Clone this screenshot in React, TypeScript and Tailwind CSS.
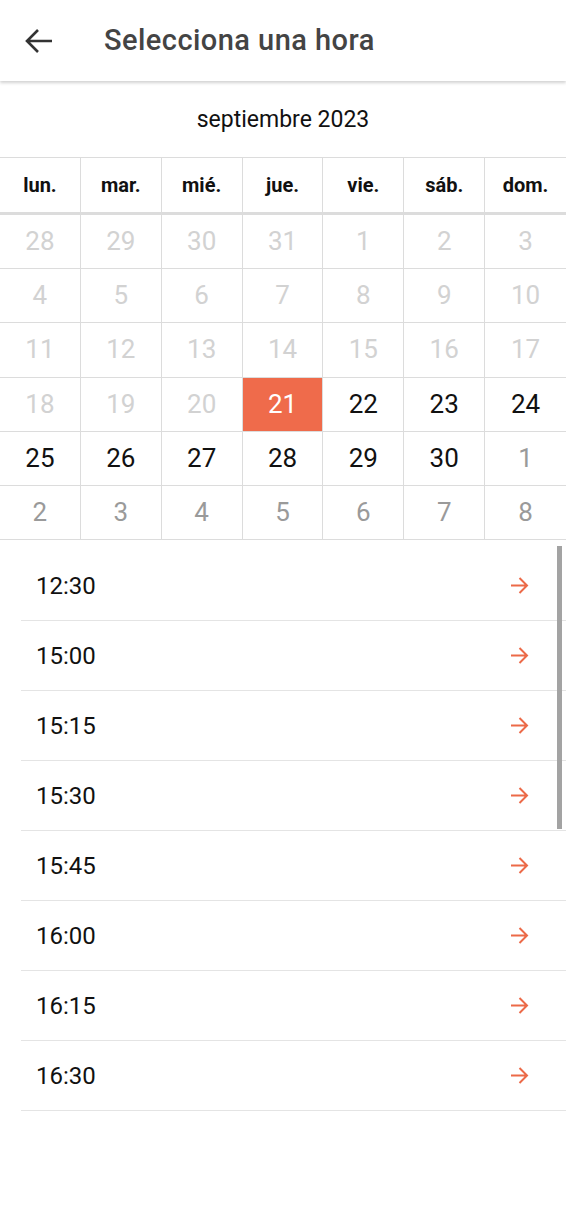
import React from "react";

const weeks: { n: number; t: "past" | "cur" | "next" | "sel" }[][] = [
  [28, 29, 30, 31, 1, 2, 3].map((n) => ({ n, t: "past" as const })),
  [4, 5, 6, 7, 8, 9, 10].map((n) => ({ n, t: "past" as const })),
  [11, 12, 13, 14, 15, 16, 17].map((n) => ({ n, t: "past" as const })),
  [
    { n: 18, t: "past" },
    { n: 19, t: "past" },
    { n: 20, t: "past" },
    { n: 21, t: "sel" },
    { n: 22, t: "cur" },
    { n: 23, t: "cur" },
    { n: 24, t: "cur" },
  ],
  [
    { n: 25, t: "cur" },
    { n: 26, t: "cur" },
    { n: 27, t: "cur" },
    { n: 28, t: "cur" },
    { n: 29, t: "cur" },
    { n: 30, t: "cur" },
    { n: 1, t: "next" },
  ],
  [2, 3, 4, 5, 6, 7, 8].map((n) => ({ n, t: "next" as const })),
];

const days = ["lun.", "mar.", "mié.", "jue.", "vie.", "sáb.", "dom."];
const times = ["12:30", "15:00", "15:15", "15:30", "15:45", "16:00", "16:15", "16:30"];

function Arrow() {
  return (
    <svg width="19" height="19" viewBox="0 0 19 19" fill="none">
      <path d="M1 9.5H17M9.5 2L17 9.5L9.5 17" stroke="#ec6a48" strokeWidth="2" strokeLinecap="butt" strokeLinejoin="miter" />
    </svg>
  );
}

export default function App() {
  return (
    <div className="w-[566px] h-[1224px] bg-white overflow-hidden relative" style={{ fontFamily: "Roboto, 'Noto Sans', sans-serif" }}>
      <div className="h-[81px] flex items-center bg-white shadow-[0_2px_3px_rgba(0,0,0,0.18)] relative z-10">
        <div className="w-[104px] flex items-center pl-[25px]">
          <svg width="28" height="26" viewBox="0 0 28 26" fill="none">
            <path d="M27 13H3M13 2L2 13L13 24" stroke="#333" strokeWidth="2.6" />
          </svg>
        </div>
        <span className="text-[29px] font-medium text-[#444] pt-[1px] tracking-[0.45px]">Selecciona una hora</span>
      </div>
      <div className="h-[76px] flex items-center justify-center text-[23px] text-[#111] pt-[3px]">septiembre 2023</div>
      <div className="border-t border-[#dcdcdc]">
        <div className="grid grid-cols-7 h-[57px] border-b-[3px] border-[#dcdcdc]">
          {days.map((d, i) => (
            <div key={d} className={`flex items-center justify-center text-[20px] font-bold text-[#111] ${i < 6 ? "border-r border-[#dcdcdc]" : ""}`}>
              {d}
            </div>
          ))}
        </div>
        {weeks.map((w, wi) => (
          <div key={wi} className="grid grid-cols-7 h-[54.2px] border-b border-[#dcdcdc]">
            {w.map((c, i) => (
              <div
                key={i}
                className={`flex items-center justify-center text-[26px] ${i < 6 ? "border-r border-[#dcdcdc]" : ""} ${
                  c.t === "past" ? "text-[#d2d2d2]" : c.t === "next" ? "text-[#9a9a9a]" : c.t === "sel" ? "bg-[#ef6b4b] text-white" : "text-[#111]"
                }`}
              >
                {c.n}
              </div>
            ))}
          </div>
        ))}
      </div>
      <div className="relative pt-[11px]">
        <div className="absolute right-[4px] top-[6px] w-[5px] h-[283px] bg-[#a3a3a3]" />
        {times.map((t) => (
          <div key={t} className="ml-[21px] h-[70px] border-b border-[#e4e4e4] flex items-center justify-between pl-[15px] pr-[37px]">
            <span className="text-[24px] text-[#111]">{t}</span>
            <Arrow />
          </div>
        ))}
      </div>
    </div>
  );
}
